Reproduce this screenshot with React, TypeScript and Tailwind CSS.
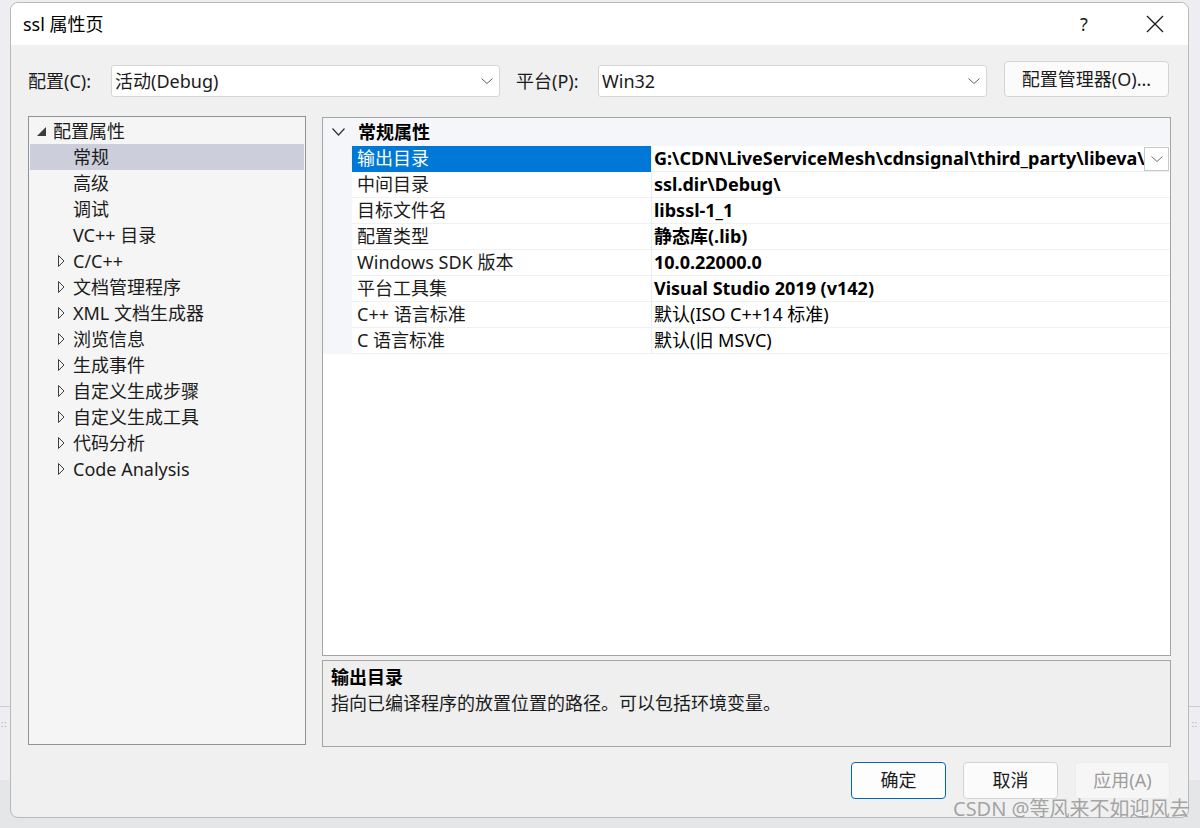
import React from 'react';

// --- DATA ---
type TreeItem = {
  label: string;
  level: 0 | 1;
  open?: boolean;
  expandable?: boolean;
  selected?: boolean;
};

const treeItems: TreeItem[] = [
  { label: '配置属性', level: 0, open: true },
  { label: '常规', level: 1, selected: true },
  { label: '高级', level: 1 },
  { label: '调试', level: 1 },
  { label: 'VC++ 目录', level: 1 },
  { label: 'C/C++', level: 1, expandable: true },
  { label: '文档管理程序', level: 1, expandable: true },
  { label: 'XML 文档生成器', level: 1, expandable: true },
  { label: '浏览信息', level: 1, expandable: true },
  { label: '生成事件', level: 1, expandable: true },
  { label: '自定义生成步骤', level: 1, expandable: true },
  { label: '自定义生成工具', level: 1, expandable: true },
  { label: '代码分析', level: 1, expandable: true },
  { label: 'Code Analysis', level: 1, expandable: true },
];

type PropRow = { name: string; value: string; bold: boolean; selected?: boolean };

const props: PropRow[] = [
  { name: '输出目录', value: 'G:\\CDN\\LiveServiceMesh\\cdnsignal\\third_party\\libeva\\libevent\\', bold: true, selected: true },
  { name: '中间目录', value: 'ssl.dir\\Debug\\', bold: true },
  { name: '目标文件名', value: 'libssl-1_1', bold: true },
  { name: '配置类型', value: '静态库(.lib)', bold: true },
  { name: 'Windows SDK 版本', value: '10.0.22000.0', bold: true },
  { name: '平台工具集', value: 'Visual Studio 2019 (v142)', bold: true },
  { name: 'C++ 语言标准', value: '默认(ISO C++14 标准)', bold: false },
  { name: 'C 语言标准', value: '默认(旧 MSVC)', bold: false },
];

// --- ICONS ---
const ChevronSmall = ({ color = '#606060' }: { color?: string }) => (
  <svg width="12" height="6" viewBox="0 0 12 6">
    <polyline points="0.5,0.5 6,5.5 11.5,0.5" fill="none" stroke={color} strokeWidth="1" />
  </svg>
);

const Combo = ({ text }: { text: string }) => (
  <div className="w-[389px] h-[32px] bg-white border border-[#d5d5d5] rounded-[3px] flex items-center pl-[3px] pr-[6px]">
    <span className="flex-1 text-[18px] text-[#1b1b1b]">{text}</span>
    <ChevronSmall />
  </div>
);

const Btn = ({ label, variant }: { label: string; variant?: 'default' | 'disabled' }) => {
  const cls =
    variant === 'default'
      ? 'border-[#0067c0] bg-[#fdfdfd] text-[#1b1b1b]'
      : variant === 'disabled'
      ? 'border-[#ececec] bg-[#f6f6f6] text-[#9d9d9d]'
      : 'border-[#d3d3d3] bg-[#fbfbfb] text-[#1b1b1b]';
  return (
    <div className={`w-[95px] h-[37px] border rounded-[4px] flex items-center justify-center text-[18px] ${cls}`}>
      {label}
    </div>
  );
};

export default function App() {
  return (
    <div className="w-[1200px] h-[828px] bg-[#e5e6e8] relative overflow-hidden font-['Noto_Sans','Noto_Sans_CJK_SC',sans-serif]">
      {/* background window bits */}
      <div className="absolute left-0 top-0 w-[1200px] h-[780px] bg-[#ededf2]" />
      <div className="absolute left-0 top-[706px] w-[1200px] h-[1px] bg-[#c8cbd8]" />
      <div className="absolute left-[1px] top-[720px] text-[8px] leading-none text-[#9a9a9a] tracking-[1px]">::</div>
      <div className="absolute right-[2px] top-[720px] text-[8px] leading-none text-[#9a9a9a] tracking-[1px]">::</div>

      {/* DIALOG */}
      <div className="relative ml-[10px] mt-[2px] w-[1179px] h-[816px] bg-[#f0f0f0] border border-[#b9b9b9] rounded-[8px] overflow-hidden flex flex-col">
        {/* title bar */}
        <div className="h-[42px] bg-white flex items-center pl-[12px] pr-[10px]">
          <span className="flex-1 text-[18px] text-black">ssl 属性页</span>
          <div className="w-[46px] flex justify-center text-[18px] text-[#1b1b1b]">?</div>
          <div className="w-[46px] ml-[25px] flex justify-center">
            <svg width="18" height="18" viewBox="0 0 18 18">
              <line x1="1" y1="1" x2="17" y2="17" stroke="#1b1b1b" strokeWidth="1.2" />
              <line x1="17" y1="1" x2="1" y2="17" stroke="#1b1b1b" strokeWidth="1.2" />
            </svg>
          </div>
        </div>

        <div className="flex-1 flex flex-col px-[17px]">
          {/* config row */}
          <div className="mt-[16px] h-[36px] flex items-end">
            <div className="w-[83px] h-[32px] flex items-center text-[18px] text-[#1b1b1b]">配置(C):</div>
            <Combo text="活动(Debug)" />
            <div className="w-[82px] h-[32px] ml-[16px] flex items-center text-[18px] text-[#1b1b1b]">平台(P):</div>
            <Combo text="Win32" />
            <div className="ml-[17px] w-[165px] h-[36px] bg-[#fbfbfb] border border-[#d3d3d3] rounded-[4px] flex items-center justify-center text-[18px] text-[#1b1b1b]">
              配置管理器(O)...
            </div>
          </div>

          {/* panels */}
          <div className="mt-[19px] flex gap-[16px]">
            {/* tree */}
            <div className="w-[278px] h-[629px] bg-[#f5f5f5] border border-[#8e929b] p-[1px]">
              {treeItems.map((it) => (
                <div
                  key={it.label}
                  className={`h-[26px] flex items-center text-[18px] text-[#1b1b1b] whitespace-nowrap ${it.selected ? 'bg-[#cccedb]' : ''} ${it.level === 0 ? 'pl-[7px]' : 'pl-[28px]'}`}
                >
                  {it.level === 0 ? (
                    <div className="w-[16px] flex items-center">
                      <svg width="9" height="9" viewBox="0 0 9 9">
                        <polygon points="9,0 9,9 0,9" fill="#3c3c3c" />
                      </svg>
                    </div>
                  ) : (
                    <div className="w-[15px] flex items-center">
                      {it.expandable && (
                        <svg width="7" height="12" viewBox="0 0 7 12">
                          <polygon points="0.5,0.5 6,6 0.5,11.5" fill="none" stroke="#3c3c3c" strokeWidth="1" />
                        </svg>
                      )}
                    </div>
                  )}
                  <span>{it.label}</span>
                </div>
              ))}
            </div>

            {/* right column */}
            <div className="w-[849px] mt-[1px] flex flex-col gap-[4px]">
              {/* property grid */}
              <div className="h-[539px] bg-white border border-[#a4a4a4] flex flex-col">
                <div className="h-[28px] bg-[#f4f6fa] flex items-center">
                  <div className="w-[29px] flex justify-center pl-[1px]">
                    <svg width="13" height="8" viewBox="0 0 13 8">
                      <polyline points="0.5,0.5 6.5,7 12.5,0.5" fill="none" stroke="#333" strokeWidth="1.2" />
                    </svg>
                  </div>
                  <span className="pl-[6px] text-[18px] font-bold text-black">常规属性</span>
                </div>
                {props.map((p) => (
                  <div key={p.name} className="h-[26px] flex">
                    <div className="w-[29px] bg-[#f4f6fa]" />
                    <div
                      className={`w-[299px] pl-[5px] flex items-center text-[18px] whitespace-nowrap border-b ${p.selected ? 'bg-[#0078d7] text-white border-[#0078d7]' : 'text-[#1b1b1b] border-[#f0f0f0]'}`}
                    >
                      {p.name}
                    </div>
                    <div className="w-[1px] bg-[#ececec]" />
                    <div className="flex-1 min-w-0 flex items-center border-b border-[#f0f0f0]">
                      <span className={`flex-1 min-w-0 overflow-hidden whitespace-nowrap pl-[2px] text-[18px] text-black ${p.bold ? 'font-bold' : ''}`}>
                        {p.value}
                      </span>
                      {p.selected && (
                        <div className="w-[25px] h-[24px] mr-[1px] bg-white border border-[#c8c8c8] flex items-center justify-center">
                          <ChevronSmall color="#707070" />
                        </div>
                      )}
                    </div>
                  </div>
                ))}
              </div>

              {/* description */}
              <div className="h-[87px] bg-[#efefef] border border-[#a4a4a4] pl-[8px] pt-[3px]">
                <div className="h-[26px] leading-[26px] text-[18px] font-bold text-black">输出目录</div>
                <div className="h-[26px] leading-[26px] text-[18px] text-[#1b1b1b]">指向已编译程序的放置位置的路径。可以包括环境变量。</div>
              </div>
            </div>
          </div>

          {/* buttons */}
          <div className="mt-[15px] flex justify-end gap-[17px] pr-[1px]">
            <Btn label="确定" variant="default" />
            <Btn label="取消" />
            <Btn label="应用(A)" variant="disabled" />
          </div>
        </div>
      </div>

      {/* watermark */}
      <div className="absolute left-[953px] top-[795px] text-[20px] leading-[28px] text-[#8f8f8f]/80 whitespace-nowrap">
        CSDN @等风来不如迎风去
      </div>
    </div>
  );
}
